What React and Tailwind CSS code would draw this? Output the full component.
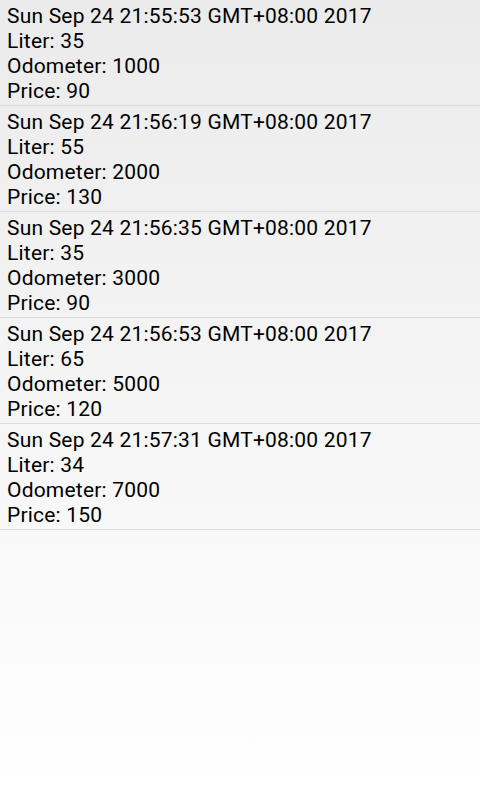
import React from 'react';

const entries = [
  { date: 'Sun Sep 24 21:55:53 GMT+08:00 2017', liter: 35, odometer: 1000, price: 90 },
  { date: 'Sun Sep 24 21:56:19 GMT+08:00 2017', liter: 55, odometer: 2000, price: 130 },
  { date: 'Sun Sep 24 21:56:35 GMT+08:00 2017', liter: 35, odometer: 3000, price: 90 },
  { date: 'Sun Sep 24 21:56:53 GMT+08:00 2017', liter: 65, odometer: 5000, price: 120 },
  { date: 'Sun Sep 24 21:57:31 GMT+08:00 2017', liter: 34, odometer: 7000, price: 150 },
];

export default function App() {
  return (
    <div className="w-[480px] h-[800px] bg-gradient-to-b from-[#ebebeb] to-white font-['Roboto',sans-serif] text-[21px] leading-[25px] tracking-[0.2px] text-black">
      {entries.map((e, i) => (
        <div key={i} className="pl-[7px] pt-[4px] pb-[1px] border-b border-[#dcdcdc]">
          <div>{e.date}</div>
          <div>Liter: {e.liter}</div>
          <div>Odometer: {e.odometer}</div>
          <div>Price: {e.price}</div>
        </div>
      ))}
    </div>
  );
}
